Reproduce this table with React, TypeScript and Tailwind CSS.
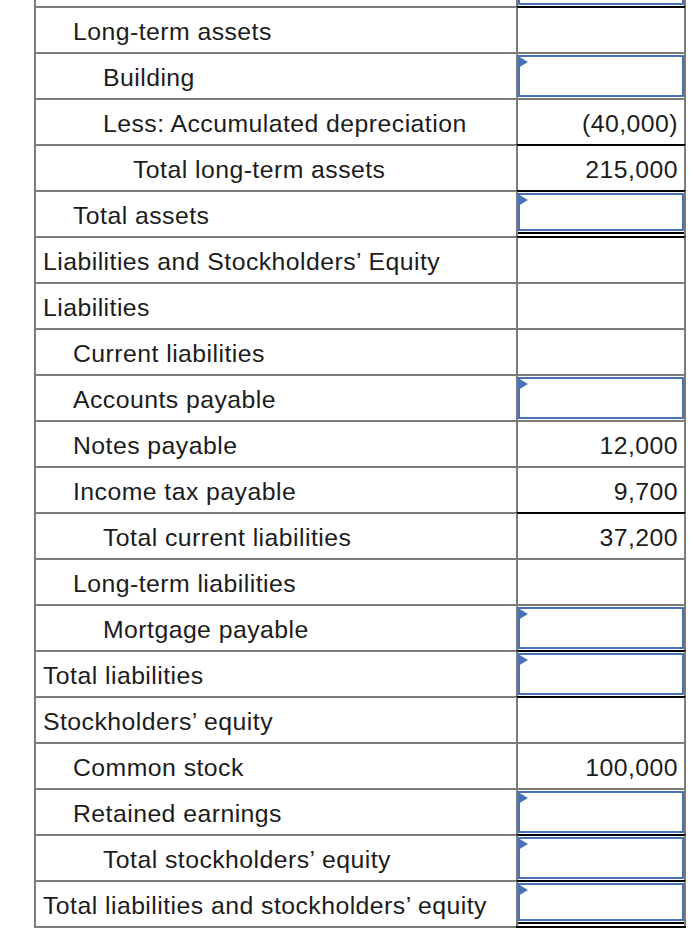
type Row = {
  label: string
  level: 0 | 1 | 2 | 3
  value?: string
  input?: boolean
  topBlack?: boolean
  doubleUnder?: boolean
}

const rows: Row[] = [
  { label: 'Long-term assets', level: 1, topBlack: true },
  { label: 'Building', level: 2, input: true },
  { label: 'Less: Accumulated depreciation', level: 2, value: '(40,000)' },
  { label: 'Total long-term assets', level: 3, value: '215,000', topBlack: true },
  { label: 'Total assets', level: 1, input: true, topBlack: true, doubleUnder: true },
  { label: 'Liabilities and Stockholders’ Equity', level: 0, topBlack: true },
  { label: 'Liabilities', level: 0 },
  { label: 'Current liabilities', level: 1 },
  { label: 'Accounts payable', level: 1, input: true },
  { label: 'Notes payable', level: 1, value: '12,000' },
  { label: 'Income tax payable', level: 1, value: '9,700' },
  { label: 'Total current liabilities', level: 2, value: '37,200', topBlack: true },
  { label: 'Long-term liabilities', level: 1 },
  { label: 'Mortgage payable', level: 2, input: true },
  { label: 'Total liabilities', level: 0, input: true, topBlack: true },
  { label: 'Stockholders’ equity', level: 0, topBlack: true },
  { label: 'Common stock', level: 1, value: '100,000' },
  { label: 'Retained earnings', level: 1, input: true },
  { label: 'Total stockholders’ equity', level: 2, input: true, topBlack: true },
  { label: 'Total liabilities and stockholders’ equity', level: 0, input: true, topBlack: true, doubleUnder: true },
]

const indent = ['pl-[7px]', 'pl-[37px]', 'pl-[67px]', 'pl-[97px]']

function InputBox() {
  return (
    <div className="relative flex-1 border-2 border-[#4a72b6]">
      <span className="absolute -left-[2px] -top-[1px] h-0 w-0 border-y-[6px] border-l-[10px] border-y-transparent border-l-[#4a72b6]" />
    </div>
  )
}

function TableRow({ row }: { row: Row }) {
  return (
    <div className="flex h-[46px]">
      <div
        className={`flex w-[482px] items-center border-l-2 border-t-2 border-[#7b7b7b] pt-[3px] ${indent[row.level]}`}
      >
        {row.label}
      </div>
      <div
        className={`w-[170px] border-x-2 border-t-2 border-x-[#7b7b7b] ${
          row.topBlack ? 'border-t-black' : 'border-t-[#7b7b7b]'
        }`}
      >
        {row.input && (
          <div className="flex h-full flex-col pt-[1px] pb-[1px]">
            <InputBox />
            {row.doubleUnder && <div className="mt-[1px] mb-[1px] h-[2px] bg-black" />}
          </div>
        )}
        {row.value && (
          <div className="flex h-full items-center justify-end pr-[6px] pt-[3px]">{row.value}</div>
        )}
      </div>
    </div>
  )
}

export default function App() {
  return (
    <div className="min-h-screen bg-white pl-[34px] font-['Liberation_Sans',Arial,sans-serif] text-[24.8px] tracking-[0.45px] text-[#1c1c1c]">
      <div className="w-[652px]">
        {/* tail of the row scrolled above */}
        <div className="flex h-[6px]">
          <div className="w-[482px] border-l-2 border-[#7b7b7b]" />
          <div className="w-[170px] border-x-2 border-[#7b7b7b]">
            <div className="h-[5px] border-x-2 border-b-2 border-[#4a72b6]" />
          </div>
        </div>
        {rows.map((row) => (
          <TableRow key={row.label} row={row} />
        ))}
        <div className="flex h-[2px]">
          <div className="w-[482px] bg-[#7b7b7b]" />
          <div className="w-[170px] bg-black" />
        </div>
      </div>
    </div>
  )
}
